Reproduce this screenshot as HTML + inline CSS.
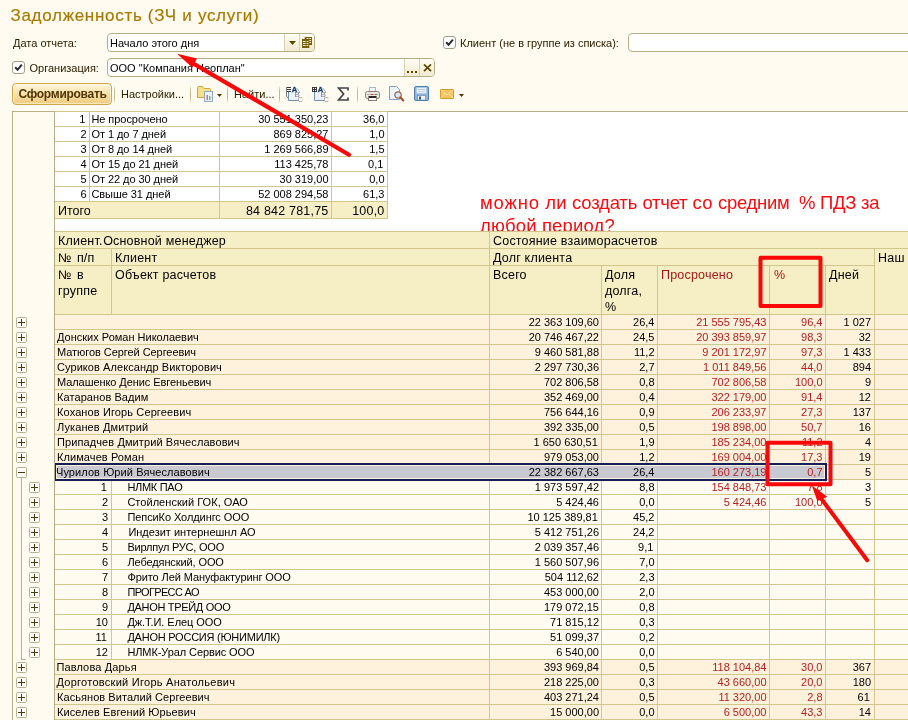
<!DOCTYPE html>
<html lang="ru"><head><meta charset="utf-8"><title>Задолженность (ЗЧ и услуги)</title>
<style>
html,body{margin:0;padding:0;}
body{width:908px;height:720px;overflow:hidden;background:#FFFBF0;font-family:"Liberation Sans",sans-serif;font-size:11px;color:#000;position:relative;}
.a{position:absolute;white-space:nowrap;}
.t{position:absolute;white-space:nowrap;line-height:15px;height:15px;font-size:11px;}
.r{text-align:right;}
.red{color:#B82020;}
.h{position:absolute;white-space:nowrap;font-size:12.5px;line-height:15px;letter-spacing:0.2px;word-spacing:0px;}
.hl{position:absolute;height:1px;background:#D2C68C;}
.vl{position:absolute;width:1px;background:#D2C68C;}
.box{position:absolute;}
.pm{position:absolute;width:9px;height:9px;border:1px solid #B9B196;border-radius:1.5px;background:#FFFEF8;}
.pm i{position:absolute;left:1px;top:4px;width:7px;height:1px;background:#4A3A10;}
.pm b{position:absolute;left:4px;top:1px;width:1px;height:7px;background:#4A3A10;}
.inp{position:absolute;background:#fff;border:1px solid #B5AD84;border-radius:4px;box-sizing:border-box;overflow:hidden;}
.ib{position:absolute;top:0;bottom:0;width:14px;border-left:1px solid #D8D0B0;background:linear-gradient(#FFFDF5,#F1EAD0);}
.lbl{position:absolute;white-space:nowrap;font-size:11px;line-height:13px;color:#2E2000;}
.cb{position:absolute;width:11px;height:11px;border:1px solid #A59C84;border-radius:3px;background:#fff;}
.sep{position:absolute;top:85px;width:1px;height:19px;background:linear-gradient(rgba(200,185,130,0),#C8B982 30%,#C8B982 70%,rgba(200,185,130,0));}
.ic{position:absolute;}
</style></head>
<body>
<div id="app" style="position:absolute;left:0;top:0;width:908px;height:720px;overflow:hidden;will-change:transform;">
<div class="a" style="left:10.5px;top:5px;font-size:17px;line-height:22px;color:#A87A00;letter-spacing:0.7px;-webkit-text-stroke:0.2px #A87A00;">Задолженность (ЗЧ и услуги)</div>
<div class="lbl" style="left:13px;top:37px;">Дата отчета:</div>
<div class="inp" style="left:107px;top:33px;width:208px;height:19px;"><div class="ib" style="left:176px;width:14px"></div><div class="ib" style="left:191px;width:16px"></div><svg style="position:absolute;left:180.5px;top:7px" width="7" height="4" viewBox="0 0 7 4"><polygon points="0,0 7,0 3.5,4" fill="#5E4600"/></svg><svg style="position:absolute;left:194px;top:3px" width="10" height="11" viewBox="0 0 11 11" preserveAspectRatio="none"><rect x="3" y="0" width="8" height="8" fill="#7A5C00"/><rect x="0" y="2" width="8" height="9" fill="#7A5C00"/><g fill="#FBF3D0"><rect x="1" y="4" width="3" height="1"/><rect x="5" y="4" width="2" height="1"/><rect x="1" y="6" width="3" height="1"/><rect x="5" y="6" width="2" height="1"/><rect x="1" y="8" width="3" height="1"/><rect x="5" y="8" width="2" height="1"/><rect x="5" y="1" width="2" height="1"/><rect x="8" y="1" width="2" height="1"/><rect x="8" y="3" width="2" height="1"/><rect x="8" y="5" width="2" height="1"/></g></svg></div>
<div class="lbl" style="left:110px;top:37px;color:#000">Начало этого дня</div>
<div class="cb" style="left:443px;top:36px"><svg width="11" height="11" viewBox="0 0 11 11" style="position:absolute;left:0;top:0"><path d="M2.2 5.3 L4.6 7.8 L8.8 2.6" fill="none" stroke="#2A2A34" stroke-width="2"/></svg></div>
<div class="lbl" style="left:460px;top:37px;">Клиент (не в группе из списка):</div>
<div class="inp" style="left:628px;top:33px;width:290px;height:19px;"></div>
<div class="cb" style="left:12px;top:61px"><svg width="11" height="11" viewBox="0 0 11 11" style="position:absolute;left:0;top:0"><path d="M2.2 5.3 L4.6 7.8 L8.8 2.6" fill="none" stroke="#2A2A34" stroke-width="2"/></svg></div>
<div class="lbl" style="left:29.5px;top:62px;">Организация:</div>
<div class="inp" style="left:107px;top:58px;width:328px;height:19px;"><div class="ib" style="left:296px;width:14px"></div><div class="ib" style="left:311px;width:16px"></div><svg style="position:absolute;left:299px;top:12px" width="11" height="2" viewBox="0 0 11 2"><g fill="#5E4600"><rect x="0" y="0" width="2" height="2"/><rect x="4" y="0" width="2" height="2"/><rect x="8" y="0" width="2" height="2"/></g></svg><svg style="position:absolute;left:314.5px;top:5px" width="9" height="7.5" viewBox="0 0 9 8" preserveAspectRatio="none"><path d="M1 0.5 L8 7.5 M8 0.5 L1 7.5" stroke="#5E4600" stroke-width="1.8" fill="none"/></svg></div>
<div class="lbl" style="left:110px;top:62px;color:#000">ООО "Компания Неоплан"</div>
<div class="a" style="left:12px;top:83px;width:100px;height:22px;box-sizing:border-box;border:1px solid #CFA84E;border-radius:4px;background:linear-gradient(#FFF6DC,#F7E0A8 50%,#EFCC80);box-shadow:inset 0 0 0 1px rgba(255,250,230,0.6);"></div>
<div class="lbl" style="left:18.5px;top:88px;font-weight:bold;font-size:12px;color:#503600;letter-spacing:-0.27px">Сформировать</div>
<div class="lbl" style="left:121px;top:88px;">Настройки...</div>
<div class="lbl" style="left:234px;top:88px;">Найти...</div>
<div class="sep" style="left:114px"></div>
<div class="sep" style="left:190px"></div>
<div class="sep" style="left:227px"></div>
<div class="sep" style="left:279px"></div>
<div class="sep" style="left:357px"></div>
<svg class="ic" style="left:196px;top:85px" width="18" height="18" viewBox="0 0 18 18">
<path d="M1.5 2.5 Q1.5 1.5 2.5 1.5 L6.5 1.5 L8 3.5 L13.5 3.5 Q14.5 3.5 14.5 4.5 L14.5 12.5 L1.5 12.5 Z" fill="#F7E08A" stroke="#D0A445" stroke-width="1"/>
<rect x="8.5" y="6.5" width="8" height="10" fill="#EEF3FA" stroke="#8FA9C8" stroke-width="1"/>
<rect x="10.5" y="10" width="1.5" height="5" fill="#EE6A60"/><rect x="13" y="11" width="1.5" height="4" fill="#6DBB74"/>
</svg>
<svg class="ic" style="left:217px;top:94px" width="5" height="3" viewBox="0 0 5 3"><polygon points="0,0 5,0 2.5,3" fill="#4A3600"/></svg>
<svg class="ic" style="left:285px;top:85px" width="18" height="18" viewBox="0 0 18 18">
<path d="M3.5 3.5 L11.5 3.5 L14.5 6.5 L14.5 15.5 L3.5 15.5 Z" fill="#EEF1FB"/>
<path d="M3.5 6 V15.5 H13" fill="none" stroke="#6E93B8" stroke-width="1"/>
<path d="M11.5 3 L14.5 6.5 V8" fill="none" stroke="#8FB0D4" stroke-width="1"/>
<path d="M1 2.5 H6 M1 4.5 H6 M1 6.5 H6" stroke="#3A3A3A" stroke-width="1" fill="none"/><path d="M1.5 2 V11.5 L3.5 13" stroke="#777" stroke-width="1" fill="none"/>
<text x="6.8" y="7" font-family="Liberation Sans, sans-serif" font-size="7.5" font-weight="bold" fill="#163E5E" stroke="#163E5E" stroke-width="0.3">A</text>
<text x="9.6" y="12.4" font-family="Liberation Sans, sans-serif" font-size="8" fill="#7E7E7E">B</text>
<text x="12.4" y="17.2" font-family="Liberation Sans, sans-serif" font-size="7.5" fill="#8A8A8A">C</text>
</svg>
<svg class="ic" style="left:311px;top:85px" width="18" height="18" viewBox="0 0 18 18">
<path d="M3.5 3.5 L11.5 3.5 L14.5 6.5 L14.5 15.5 L3.5 15.5 Z" fill="#EEF1FB"/>
<path d="M3.5 6 V15.5 H13" fill="none" stroke="#6E93B8" stroke-width="1"/>
<path d="M11.5 3 L14.5 6.5 V8" fill="none" stroke="#8FB0D4" stroke-width="1"/>
<path d="M1 2.5 H6 M1 4.5 H6 M1 6.5 H6 M1.5 2 V7 M3.5 2 V7 M5.5 2 V7" stroke="#3A3A3A" stroke-width="1" fill="none"/>
<text x="6.8" y="7" font-family="Liberation Sans, sans-serif" font-size="7.5" font-weight="bold" fill="#163E5E" stroke="#163E5E" stroke-width="0.3">A</text>
<text x="9.6" y="12.4" font-family="Liberation Sans, sans-serif" font-size="8" fill="#7E7E7E">B</text>
<text x="12.4" y="17.2" font-family="Liberation Sans, sans-serif" font-size="7.5" fill="#8A8A8A">C</text>
</svg>
<svg class="ic" style="left:337px;top:87px" width="13" height="14" viewBox="0 0 13 14"><path d="M11 3.5 V1 H1.6 L6.6 7 L1.6 13 H11 V10.5" fill="none" stroke="#444448" stroke-width="1.7" stroke-linejoin="miter"/></svg>
<svg class="ic" style="left:364px;top:86px" width="17" height="16" viewBox="0 0 17 16">
<rect x="5.5" y="1.5" width="6" height="5" fill="#F4F7FB" stroke="#A9B7CC"/>
<rect x="1.5" y="5.5" width="14" height="7" rx="2" fill="#EAE6E2" stroke="#8E7E74"/>
<rect x="3" y="8" width="11" height="1" fill="#B9ACA4"/>
<rect x="7" y="8" width="2" height="1" fill="#E03030"/><rect x="11" y="8" width="2" height="1" fill="#30A040"/>
<rect x="4.5" y="10.5" width="8" height="4" fill="#FFFFFF" stroke="#8E7E74"/>
<rect x="5" y="10" width="7" height="2" fill="#2A2A2A"/>
</svg>
<svg class="ic" style="left:388px;top:85px" width="17" height="17" viewBox="0 0 17 17">
<path d="M1.5 1.5 L8.5 1.5 L11.5 4.5 L11.5 14.5 L1.5 14.5 Z" fill="#EEF4FC" stroke="#7F9FC4"/>
<circle cx="10" cy="10" r="3.2" fill="#D8E8F8" stroke="#9A6A4A" stroke-width="1.2"/>
<path d="M12.3 12.3 L15.2 15.4" stroke="#A0522D" stroke-width="2.2" stroke-linecap="round"/>
</svg>
<svg class="ic" style="left:414px;top:86px" width="15" height="15" viewBox="0 0 15 15">
<rect x="0.5" y="0.5" width="14" height="14" rx="1.5" fill="#8FB5DE" stroke="#4E7CAC"/>
<rect x="2.5" y="1.5" width="10" height="6" fill="#E6EFF9" stroke="#A9C4E2" stroke-width="0.6"/>
<rect x="4" y="3" width="7" height="1" fill="#B4CAE2"/><rect x="4" y="5" width="7" height="1" fill="#C8D8EA"/>
<rect x="3.5" y="9.5" width="8" height="4.5" fill="#F4F4F4" stroke="#5E86B2" stroke-width="0.6"/>
<rect x="5" y="10.5" width="2" height="3" fill="#34587F"/>
</svg>
<svg class="ic" style="left:440px;top:89px" width="14" height="10" viewBox="0 0 15 10" preserveAspectRatio="none">
<rect x="0.5" y="0.5" width="14" height="9" fill="#F4C460" stroke="#D29A2A"/>
<path d="M0.5 0.5 L7.5 6 L14.5 0.5 M0.5 9.5 L5.5 4.5 M14.5 9.5 L9.5 4.5" fill="none" stroke="#FBE3A6" stroke-width="1"/>
</svg>
<svg class="ic" style="left:459px;top:94px" width="5" height="3" viewBox="0 0 5 3"><polygon points="0,0 5,0 2.5,3" fill="#4A3600"/></svg>
<div class="hl" style="left:12px;top:111px;width:896px;background:#B9B088"></div>
<div class="vl" style="left:12px;top:111px;height:609px;background:#B9B088"></div>
<div class="box" style="left:55px;top:112px;width:853px;height:120px;background:#fff;"></div>
<div class="box" style="left:55px;top:202px;width:332px;height:16px;background:#F6EEC4;"></div>
<div class="hl" style="left:54px;top:111px;width:334px;"></div>
<div class="hl" style="left:54px;top:126px;width:334px;"></div>
<div class="hl" style="left:54px;top:141px;width:334px;"></div>
<div class="hl" style="left:54px;top:156px;width:334px;"></div>
<div class="hl" style="left:54px;top:171px;width:334px;"></div>
<div class="hl" style="left:54px;top:186px;width:334px;"></div>
<div class="hl" style="left:54px;top:201px;width:334px;"></div>
<div class="hl" style="left:54px;top:218px;width:334px;"></div>
<div class="vl" style="left:54px;top:111px;height:108px;"></div>
<div class="vl" style="left:89px;top:111px;height:108px;"></div>
<div class="vl" style="left:219px;top:111px;height:108px;"></div>
<div class="vl" style="left:331px;top:111px;height:108px;"></div>
<div class="vl" style="left:387px;top:111px;height:108px;"></div>
<div class="vl" style="left:89px;top:202px;height:16px;background:#F6EEC4"></div>
<div class="t r" style="right:822.7px;top:112px;">1</div>
<div class="t" style="left:91.4px;top:112px;letter-spacing:-0.05px">Не просрочено</div>
<div class="t r" style="right:579.5px;top:112px;">30 551 350,23</div>
<div class="t r" style="right:523.5px;top:112px;">36,0</div>
<div class="t r" style="right:821.5px;top:127px;">2</div>
<div class="t" style="left:91.4px;top:127px;letter-spacing:-0.05px">От 1 до 7 дней</div>
<div class="t r" style="right:579.5px;top:127px;">869 825,27</div>
<div class="t r" style="right:523.5px;top:127px;">1,0</div>
<div class="t r" style="right:821.5px;top:142px;">3</div>
<div class="t" style="left:91.4px;top:142px;letter-spacing:-0.05px">От 8 до 14 дней</div>
<div class="t r" style="right:579.5px;top:142px;">1 269 566,89</div>
<div class="t r" style="right:523.5px;top:142px;">1,5</div>
<div class="t r" style="right:821.5px;top:157px;">4</div>
<div class="t" style="left:91.4px;top:157px;letter-spacing:-0.05px">От 15 до 21 дней</div>
<div class="t r" style="right:579.5px;top:157px;">113 425,78</div>
<div class="t r" style="right:524.7px;top:157px;">0,1</div>
<div class="t r" style="right:821.5px;top:172px;">5</div>
<div class="t" style="left:91.4px;top:172px;letter-spacing:-0.05px">От 22 до 30 дней</div>
<div class="t r" style="right:579.5px;top:172px;">30 319,00</div>
<div class="t r" style="right:523.5px;top:172px;">0,0</div>
<div class="t r" style="right:821.5px;top:187px;">6</div>
<div class="t" style="left:91.4px;top:187px;letter-spacing:-0.05px">Свыше 31 дней</div>
<div class="t r" style="right:579.5px;top:187px;">52 008 294,58</div>
<div class="t r" style="right:523.5px;top:187px;">61,3</div>
<div class="h" style="left:58px;top:204px;letter-spacing:0">Итого</div>
<div class="h r" style="right:579.5px;top:204px;letter-spacing:0.2px">84 842 781,75</div>
<div class="h r" style="right:523.5px;top:204px;letter-spacing:0.2px">100,0</div>
<div class="a" style="left:480px;top:190.5px;height:40.5px;overflow:hidden;font-size:18.5px;line-height:23px;letter-spacing:0.15px;color:#F80C0C;white-space:normal;width:428px;"><span style="white-space:nowrap"><span style="letter-spacing:0.85px">можно</span> ли <span style="letter-spacing:-0.18px">создать</span> <span style="letter-spacing:-0.25px">отчет</span> со <span style="letter-spacing:-0.3px">средним&nbsp; % ПДЗ за</span></span><br>любой период?</div>
<div class="box" style="left:55px;top:232px;width:853px;height:82px;background:#F6EEC4;"></div>
<div class="hl" style="left:54px;top:231px;width:854px;"></div>
<div class="hl" style="left:54px;top:248px;width:854px;"></div>
<div class="hl" style="left:54px;top:265px;width:820px;"></div>
<div class="hl" style="left:54px;top:314px;width:854px;"></div>
<div class="vl" style="left:111px;top:248px;height:66px;"></div>
<div class="h" style="left:58px;top:233.5px;">Клиент.<span style="margin-left:0.5px">Основной</span> менеджер</div>
<div class="h" style="left:493px;top:233.5px;">Состояние взаиморасчетов</div>
<div class="h" style="left:58px;top:250.5px;word-spacing:1.6px">№ п/п</div>
<div class="h" style="left:115px;top:250.5px;">Клиент</div>
<div class="h" style="left:493px;top:250.5px;">Долг клиента</div>
<div class="h" style="left:878px;top:250.5px;">Наш</div>
<div class="h" style="left:58px;top:267.5px;word-spacing:1.6px">№ в</div>
<div class="h" style="left:58px;top:283.5px;">группе</div>
<div class="h" style="left:115px;top:267.5px;">Объект расчетов</div>
<div class="h" style="left:493px;top:267.5px;">Всего</div>
<div class="h" style="left:605px;top:267.5px;">Доля</div>
<div class="h" style="left:605px;top:283.5px;">долга,</div>
<div class="h" style="left:605px;top:299.5px;">%</div>
<div class="h" style="left:661px;top:267.5px;color:#A81818">Просрочено</div>
<div class="h" style="left:774px;top:267.5px;color:#A81818">%</div>
<div class="h" style="left:829px;top:267.5px;">Дней</div>
<div class="box" style="left:55px;top:315px;width:853px;height:14px;background:#FEF2DC;"></div>
<div class="box" style="left:55px;top:330px;width:853px;height:14px;background:#FEF2DC;"></div>
<div class="box" style="left:55px;top:345px;width:853px;height:14px;background:#FEF2DC;"></div>
<div class="box" style="left:55px;top:360px;width:853px;height:14px;background:#FEF2DC;"></div>
<div class="box" style="left:55px;top:375px;width:853px;height:14px;background:#FEF2DC;"></div>
<div class="box" style="left:55px;top:390px;width:853px;height:14px;background:#FEF2DC;"></div>
<div class="box" style="left:55px;top:405px;width:853px;height:14px;background:#FEF2DC;"></div>
<div class="box" style="left:55px;top:420px;width:853px;height:14px;background:#FEF2DC;"></div>
<div class="box" style="left:55px;top:435px;width:853px;height:14px;background:#FEF2DC;"></div>
<div class="box" style="left:55px;top:450px;width:853px;height:14px;background:#FEF2DC;"></div>
<div class="box" style="left:55px;top:465px;width:853px;height:14px;background:#FEF2DC;"></div>
<div class="box" style="left:55px;top:660px;width:853px;height:14px;background:#FEF2DC;"></div>
<div class="box" style="left:55px;top:675px;width:853px;height:14px;background:#FEF2DC;"></div>
<div class="box" style="left:55px;top:690px;width:853px;height:14px;background:#FEF2DC;"></div>
<div class="box" style="left:55px;top:705px;width:853px;height:14px;background:#FEF2DC;"></div>
<div class="hl" style="left:54px;top:314px;width:854px;"></div>
<div class="hl" style="left:54px;top:329px;width:854px;"></div>
<div class="hl" style="left:54px;top:344px;width:854px;"></div>
<div class="hl" style="left:54px;top:359px;width:854px;"></div>
<div class="hl" style="left:54px;top:374px;width:854px;"></div>
<div class="hl" style="left:54px;top:389px;width:854px;"></div>
<div class="hl" style="left:54px;top:404px;width:854px;"></div>
<div class="hl" style="left:54px;top:419px;width:854px;"></div>
<div class="hl" style="left:54px;top:434px;width:854px;"></div>
<div class="hl" style="left:54px;top:449px;width:854px;"></div>
<div class="hl" style="left:54px;top:464px;width:854px;"></div>
<div class="hl" style="left:54px;top:479px;width:854px;"></div>
<div class="hl" style="left:54px;top:494px;width:854px;"></div>
<div class="hl" style="left:54px;top:509px;width:854px;"></div>
<div class="hl" style="left:54px;top:524px;width:854px;"></div>
<div class="hl" style="left:54px;top:539px;width:854px;"></div>
<div class="hl" style="left:54px;top:554px;width:854px;"></div>
<div class="hl" style="left:54px;top:569px;width:854px;"></div>
<div class="hl" style="left:54px;top:584px;width:854px;"></div>
<div class="hl" style="left:54px;top:599px;width:854px;"></div>
<div class="hl" style="left:54px;top:614px;width:854px;"></div>
<div class="hl" style="left:54px;top:629px;width:854px;"></div>
<div class="hl" style="left:54px;top:644px;width:854px;"></div>
<div class="hl" style="left:54px;top:659px;width:854px;"></div>
<div class="hl" style="left:54px;top:674px;width:854px;"></div>
<div class="hl" style="left:54px;top:689px;width:854px;"></div>
<div class="hl" style="left:54px;top:704px;width:854px;"></div>
<div class="hl" style="left:54px;top:719px;width:854px;"></div>
<div class="vl" style="left:54px;top:111px;height:609px;background:#B6AE82"></div>
<div class="vl" style="left:489px;top:231px;height:489px;"></div>
<div class="vl" style="left:874px;top:248px;height:472px;"></div>
<div class="vl" style="left:601px;top:265px;height:455px;"></div>
<div class="vl" style="left:657px;top:265px;height:455px;"></div>
<div class="vl" style="left:769px;top:265px;height:455px;"></div>
<div class="vl" style="left:825px;top:265px;height:455px;"></div>
<div class="vl" style="left:111px;top:479px;height:180px;"></div>
<div class="box" style="left:55px;top:463px;width:772px;height:18px;box-sizing:border-box;border:2px solid #161E58;border-left-width:1px;background:#C9C9D2;box-shadow:inset 0 0 0 1px #FBF1E2;"></div>
<div class="vl" style="left:21px;top:478px;height:182px;background:#B9B196"></div>
<div class="hl" style="left:21px;top:659px;width:5px;background:#B9B196"></div>
<div class="pm" style="left:16px;top:317px"><i></i><b></b></div>
<div class="t" style="left:57px;top:315px;"></div>
<div class="t r" style="right:309px;top:315px;">22 363 109,60</div>
<div class="t r" style="right:253.5px;top:315px;">26,4</div>
<div class="t r red" style="right:141.5px;top:315px;">21 555 795,43</div>
<div class="t r red" style="right:85.5px;top:315px;">96,4</div>
<div class="t r" style="right:37px;top:315px;">1 027</div>
<div class="pm" style="left:16px;top:332px"><i></i><b></b></div>
<div class="t" style="left:57px;top:330px;">Донских Роман Николаевич</div>
<div class="t r" style="right:309px;top:330px;">20 746 467,22</div>
<div class="t r" style="right:253.5px;top:330px;">24,5</div>
<div class="t r red" style="right:141.5px;top:330px;">20 393 859,97</div>
<div class="t r red" style="right:85.5px;top:330px;">98,3</div>
<div class="t r" style="right:37px;top:330px;">32</div>
<div class="pm" style="left:16px;top:347px"><i></i><b></b></div>
<div class="t" style="left:57px;top:345px;letter-spacing:-0.057px">Матюгов Сергей Сергеевич</div>
<div class="t r" style="right:309px;top:345px;">9 460 581,88</div>
<div class="t r" style="right:253.5px;top:345px;">11,2</div>
<div class="t r red" style="right:141.5px;top:345px;">9 201 172,97</div>
<div class="t r red" style="right:85.5px;top:345px;">97,3</div>
<div class="t r" style="right:37px;top:345px;">1 433</div>
<div class="pm" style="left:16px;top:362px"><i></i><b></b></div>
<div class="t" style="left:57px;top:360px;letter-spacing:0.067px">Суриков Александр Викторович</div>
<div class="t r" style="right:309px;top:360px;">2 297 730,36</div>
<div class="t r" style="right:253.5px;top:360px;">2,7</div>
<div class="t r red" style="right:141.5px;top:360px;">1 011 849,56</div>
<div class="t r red" style="right:85.5px;top:360px;">44,0</div>
<div class="t r" style="right:37px;top:360px;">894</div>
<div class="pm" style="left:16px;top:377px"><i></i><b></b></div>
<div class="t" style="left:57px;top:375px;letter-spacing:-0.072px">Малашенко Денис Евгеньевич</div>
<div class="t r" style="right:309px;top:375px;">702 806,58</div>
<div class="t r" style="right:253.5px;top:375px;">0,8</div>
<div class="t r red" style="right:141.5px;top:375px;">702 806,58</div>
<div class="t r red" style="right:85.5px;top:375px;">100,0</div>
<div class="t r" style="right:37px;top:375px;">9</div>
<div class="pm" style="left:16px;top:392px"><i></i><b></b></div>
<div class="t" style="left:57px;top:390px;letter-spacing:0.079px">Катаранов Вадим</div>
<div class="t r" style="right:309px;top:390px;">352 469,00</div>
<div class="t r" style="right:253.5px;top:390px;">0,4</div>
<div class="t r red" style="right:141.5px;top:390px;">322 179,00</div>
<div class="t r red" style="right:85.5px;top:390px;">91,4</div>
<div class="t r" style="right:37px;top:390px;">12</div>
<div class="pm" style="left:16px;top:407px"><i></i><b></b></div>
<div class="t" style="left:57px;top:405px;letter-spacing:0.118px">Коханов Игорь Сергеевич</div>
<div class="t r" style="right:309px;top:405px;">756 644,16</div>
<div class="t r" style="right:253.5px;top:405px;">0,9</div>
<div class="t r red" style="right:141.5px;top:405px;">206 233,97</div>
<div class="t r red" style="right:85.5px;top:405px;">27,3</div>
<div class="t r" style="right:37px;top:405px;">137</div>
<div class="pm" style="left:16px;top:422px"><i></i><b></b></div>
<div class="t" style="left:57px;top:420px;letter-spacing:0.107px">Луканев Дмитрий</div>
<div class="t r" style="right:309px;top:420px;">392 335,00</div>
<div class="t r" style="right:253.5px;top:420px;">0,5</div>
<div class="t r red" style="right:141.5px;top:420px;">198 898,00</div>
<div class="t r red" style="right:85.5px;top:420px;">50,7</div>
<div class="t r" style="right:37px;top:420px;">16</div>
<div class="pm" style="left:16px;top:437px"><i></i><b></b></div>
<div class="t" style="left:57px;top:435px;letter-spacing:0.100px">Припадчев Дмитрий Вячеславович</div>
<div class="t r" style="right:310.2px;top:435px;">1 650 630,51</div>
<div class="t r" style="right:253.5px;top:435px;">1,9</div>
<div class="t r red" style="right:141.5px;top:435px;">185 234,00</div>
<div class="t r red" style="right:85.5px;top:435px;">11,2</div>
<div class="t r" style="right:37px;top:435px;">4</div>
<div class="pm" style="left:16px;top:452px"><i></i><b></b></div>
<div class="t" style="left:57px;top:450px;letter-spacing:0.085px">Климачев Роман</div>
<div class="t r" style="right:309px;top:450px;">979 053,00</div>
<div class="t r" style="right:253.5px;top:450px;">1,2</div>
<div class="t r red" style="right:141.5px;top:450px;">169 004,00</div>
<div class="t r red" style="right:85.5px;top:450px;">17,3</div>
<div class="t r" style="right:37px;top:450px;">19</div>
<div class="pm" style="left:16px;top:467px"><i></i></div>
<div class="t" style="left:56px;top:465px;letter-spacing:0.079px">Чурилов Юрий Вячеславович</div>
<div class="t r" style="right:309px;top:465px;">22 382 667,63</div>
<div class="t r" style="right:253.5px;top:465px;">26,4</div>
<div class="t r red" style="right:141.5px;top:465px;">160 273,19</div>
<div class="t r red" style="right:85.5px;top:465px;">0,7</div>
<div class="t r" style="right:37px;top:465px;">5</div>
<div class="pm" style="left:29px;top:482px"><i></i><b></b></div>
<div class="t r" style="right:801.2px;top:480px;">1</div>
<div class="t" style="left:127.4px;top:480px;letter-spacing:-0.286px">НЛМК ПАО</div>
<div class="t r" style="right:309px;top:480px;">1 973 597,42</div>
<div class="t r" style="right:253.5px;top:480px;">8,8</div>
<div class="t r red" style="right:141.5px;top:480px;">154 848,73</div>
<div class="t r red" style="right:85.5px;top:480px;">7,8</div>
<div class="t r" style="right:37px;top:480px;">3</div>
<div class="pm" style="left:29px;top:497px"><i></i><b></b></div>
<div class="t r" style="right:800px;top:495px;">2</div>
<div class="t" style="left:127.4px;top:495px;letter-spacing:0.037px">Стойленский ГОК, ОАО</div>
<div class="t r" style="right:309px;top:495px;">5 424,46</div>
<div class="t r" style="right:253.5px;top:495px;">0,0</div>
<div class="t r red" style="right:141.5px;top:495px;">5 424,46</div>
<div class="t r red" style="right:85.5px;top:495px;">100,0</div>
<div class="t r" style="right:37px;top:495px;">5</div>
<div class="pm" style="left:29px;top:512px"><i></i><b></b></div>
<div class="t r" style="right:800px;top:510px;">3</div>
<div class="t" style="left:127.4px;top:510px;letter-spacing:-0.079px">ПепсиКо Холдингс ООО</div>
<div class="t r" style="right:310.2px;top:510px;">10 125 389,81</div>
<div class="t r" style="right:253.5px;top:510px;">45,2</div>
<div class="t r red" style="right:141.5px;top:510px;"></div>
<div class="t r red" style="right:85.5px;top:510px;"></div>
<div class="t r" style="right:37px;top:510px;"></div>
<div class="pm" style="left:29px;top:527px"><i></i><b></b></div>
<div class="t r" style="right:800px;top:525px;">4</div>
<div class="t" style="left:128.4px;top:525px;">Индезит интернешнл АО</div>
<div class="t r" style="right:309px;top:525px;">5 412 751,26</div>
<div class="t r" style="right:253.5px;top:525px;">24,2</div>
<div class="t r red" style="right:141.5px;top:525px;"></div>
<div class="t r red" style="right:85.5px;top:525px;"></div>
<div class="t r" style="right:37px;top:525px;"></div>
<div class="pm" style="left:29px;top:542px"><i></i><b></b></div>
<div class="t r" style="right:800px;top:540px;">5</div>
<div class="t" style="left:127.4px;top:540px;letter-spacing:-0.220px">Вирлпул РУС, ООО</div>
<div class="t r" style="right:309px;top:540px;">2 039 357,46</div>
<div class="t r" style="right:254.7px;top:540px;">9,1</div>
<div class="t r red" style="right:141.5px;top:540px;"></div>
<div class="t r red" style="right:85.5px;top:540px;"></div>
<div class="t r" style="right:37px;top:540px;"></div>
<div class="pm" style="left:29px;top:557px"><i></i><b></b></div>
<div class="t r" style="right:800px;top:555px;">6</div>
<div class="t" style="left:127.4px;top:555px;letter-spacing:-0.107px">Лебедянский, ООО</div>
<div class="t r" style="right:309px;top:555px;">1 560 507,96</div>
<div class="t r" style="right:253.5px;top:555px;">7,0</div>
<div class="t r red" style="right:141.5px;top:555px;"></div>
<div class="t r red" style="right:85.5px;top:555px;"></div>
<div class="t r" style="right:37px;top:555px;"></div>
<div class="pm" style="left:29px;top:572px"><i></i><b></b></div>
<div class="t r" style="right:800px;top:570px;">7</div>
<div class="t" style="left:127.4px;top:570px;letter-spacing:-0.092px">Фрито Лей Мануфактуринг ООО</div>
<div class="t r" style="right:309px;top:570px;">504 112,62</div>
<div class="t r" style="right:253.5px;top:570px;">2,3</div>
<div class="t r red" style="right:141.5px;top:570px;"></div>
<div class="t r red" style="right:85.5px;top:570px;"></div>
<div class="t r" style="right:37px;top:570px;"></div>
<div class="pm" style="left:29px;top:587px"><i></i><b></b></div>
<div class="t r" style="right:800px;top:585px;">8</div>
<div class="t" style="left:127.4px;top:585px;letter-spacing:-0.660px">ПРОГРЕСС АО</div>
<div class="t r" style="right:309px;top:585px;">453 000,00</div>
<div class="t r" style="right:253.5px;top:585px;">2,0</div>
<div class="t r red" style="right:141.5px;top:585px;"></div>
<div class="t r red" style="right:85.5px;top:585px;"></div>
<div class="t r" style="right:37px;top:585px;"></div>
<div class="pm" style="left:29px;top:602px"><i></i><b></b></div>
<div class="t r" style="right:800px;top:600px;">9</div>
<div class="t" style="left:127.4px;top:600px;letter-spacing:-0.314px">ДАНОН ТРЕЙД ООО</div>
<div class="t r" style="right:309px;top:600px;">179 072,15</div>
<div class="t r" style="right:253.5px;top:600px;">0,8</div>
<div class="t r red" style="right:141.5px;top:600px;"></div>
<div class="t r red" style="right:85.5px;top:600px;"></div>
<div class="t r" style="right:37px;top:600px;"></div>
<div class="pm" style="left:29px;top:617px"><i></i><b></b></div>
<div class="t r" style="right:800px;top:615px;">10</div>
<div class="t" style="left:127.4px;top:615px;letter-spacing:-0.060px">Дж.Т.И. Елец ООО</div>
<div class="t r" style="right:309px;top:615px;">71 815,12</div>
<div class="t r" style="right:253.5px;top:615px;">0,3</div>
<div class="t r red" style="right:141.5px;top:615px;"></div>
<div class="t r red" style="right:85.5px;top:615px;"></div>
<div class="t r" style="right:37px;top:615px;"></div>
<div class="pm" style="left:29px;top:632px"><i></i><b></b></div>
<div class="t r" style="right:801.2px;top:630px;">11</div>
<div class="t" style="left:127.4px;top:630px;letter-spacing:-0.238px">ДАНОН РОССИЯ (ЮНИМИЛК)</div>
<div class="t r" style="right:309px;top:630px;">51 099,37</div>
<div class="t r" style="right:253.5px;top:630px;">0,2</div>
<div class="t r red" style="right:141.5px;top:630px;"></div>
<div class="t r red" style="right:85.5px;top:630px;"></div>
<div class="t r" style="right:37px;top:630px;"></div>
<div class="pm" style="left:29px;top:647px"><i></i><b></b></div>
<div class="t r" style="right:800px;top:645px;">12</div>
<div class="t" style="left:127.4px;top:645px;letter-spacing:-0.095px">НЛМК-Урал Сервис ООО</div>
<div class="t r" style="right:309px;top:645px;">6 540,00</div>
<div class="t r" style="right:253.5px;top:645px;">0,0</div>
<div class="t r red" style="right:141.5px;top:645px;"></div>
<div class="t r red" style="right:85.5px;top:645px;"></div>
<div class="t r" style="right:37px;top:645px;"></div>
<div class="pm" style="left:16px;top:662px"><i></i><b></b></div>
<div class="t" style="left:56.4px;top:660px;letter-spacing:0.142px">Павлова Дарья</div>
<div class="t r" style="right:309px;top:660px;">393 969,84</div>
<div class="t r" style="right:253.5px;top:660px;">0,5</div>
<div class="t r red" style="right:141.5px;top:660px;">118 104,84</div>
<div class="t r red" style="right:85.5px;top:660px;">30,0</div>
<div class="t r" style="right:37px;top:660px;">367</div>
<div class="pm" style="left:16px;top:677px"><i></i><b></b></div>
<div class="t" style="left:56.4px;top:675px;letter-spacing:0.272px">Дорготовский Игорь Анатольевич</div>
<div class="t r" style="right:309px;top:675px;">218 225,00</div>
<div class="t r" style="right:253.5px;top:675px;">0,3</div>
<div class="t r red" style="right:141.5px;top:675px;">43 660,00</div>
<div class="t r red" style="right:85.5px;top:675px;">20,0</div>
<div class="t r" style="right:37px;top:675px;">180</div>
<div class="pm" style="left:16px;top:692px"><i></i><b></b></div>
<div class="t" style="left:57px;top:690px;letter-spacing:0.060px">Касьянов Виталий Сергеевич</div>
<div class="t r" style="right:309px;top:690px;">403 271,24</div>
<div class="t r" style="right:253.5px;top:690px;">0,5</div>
<div class="t r red" style="right:141.5px;top:690px;">11 320,00</div>
<div class="t r red" style="right:85.5px;top:690px;">2,8</div>
<div class="t r" style="right:38.2px;top:690px;">61</div>
<div class="pm" style="left:16px;top:707px"><i></i><b></b></div>
<div class="t" style="left:57px;top:705px;letter-spacing:0.100px">Киселев Евгений Юрьевич</div>
<div class="t r" style="right:309px;top:705px;">15 000,00</div>
<div class="t r" style="right:253.5px;top:705px;">0,0</div>
<div class="t r red" style="right:141.5px;top:705px;">6 500,00</div>
<div class="t r red" style="right:85.5px;top:705px;">43,3</div>
<div class="t r" style="right:37px;top:705px;">14</div>
<svg class="a" style="left:0;top:0;pointer-events:none" width="908" height="720" viewBox="0 0 908 720">
<g stroke="#FA0808" fill="none" stroke-linecap="round" stroke-linejoin="round">
<line x1="349" y1="154.7" x2="192" y2="62.7" stroke-width="4.2"/>
<line x1="867.2" y1="560.2" x2="820" y2="497" stroke-width="4"/>
<rect x="760.5" y="257.8" width="60" height="48.3" stroke-width="4"/>
<rect x="767.5" y="442.7" width="63" height="41.5" stroke-width="4"/>
</g>
<g fill="#FA0808">
<polygon points="177,53.7 197,58.5 192.3,67.5"/>
<polygon points="811.8,485.5 827.3,496.8 817.3,501"/>
</g>
</svg>
</div>
</body></html>
